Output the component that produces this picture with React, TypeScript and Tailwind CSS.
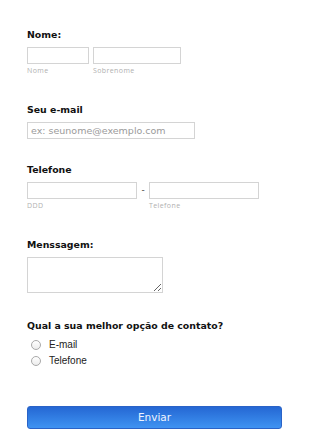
import React from "react";

const heading = "text-[9.4px] leading-[12px] font-bold text-[#111111]";
const sans = { fontFamily: '"DejaVu Sans", Verdana, sans-serif' };
const field =
  "block h-[17px] rounded-none border border-[#d4d4d4] bg-white px-[3px] outline-none";
const hint = "mt-[2px] text-[7px] leading-[9px] tracking-[0.4px] text-[#b0b0b0]";

function Radio({ label }: { label: string }) {
  return (
    <label className="flex h-[16px] items-center">
      <span className="ml-[4px] h-[10px] w-[10px] rounded-full border border-[#a9a9a9] bg-gradient-to-b from-white to-[#ececec]" />
      <span
        className="ml-[8px] text-[10px] leading-[12px] text-[#222222]"
        style={{ fontFamily: '"Liberation Sans", Arial, sans-serif' }}
      >
        {label}
      </span>
    </label>
  );
}

export default function App() {
  return (
    <div className="min-h-[448px] w-[310px] bg-white pl-[27px] pt-[29px]" style={sans}>
      <div>
        <p className={heading}>Nome:</p>
        <div className="mt-[6px] flex gap-[4px]">
          <div>
            <input className={`${field} w-[62px]`} />
            <p className={hint} style={{ fontFamily: '"Open Sans", sans-serif' }}>
              Nome
            </p>
          </div>
          <div>
            <input className={`${field} w-[88px]`} />
            <p className={hint} style={{ fontFamily: '"Open Sans", sans-serif' }}>
              Sobrenome
            </p>
          </div>
        </div>
      </div>

      <div className="mt-[29px]">
        <p className={heading}>Seu e-mail</p>
        <input
          className={`${field} mt-[6px] h-[16px] w-[168px] text-[9.5px] placeholder:text-[#9a9a9a]`}
          placeholder="ex: seunome@exemplo.com"
          style={sans}
        />
      </div>

      <div className="mt-[25px]">
        <p className={heading}>Telefone</p>
        <div className="mt-[6px] flex">
          <div>
            <input className={`${field} w-[110px]`} />
            <p className={hint} style={{ fontFamily: '"Open Sans", sans-serif' }}>
              DDD
            </p>
          </div>
          <span className="flex h-[17px] w-[12px] items-center justify-center text-[9px] text-[#444444]">
            -
          </span>
          <div>
            <input className={`${field} w-[110px]`} />
            <p className={hint} style={{ fontFamily: '"Open Sans", sans-serif' }}>
              Telefone
            </p>
          </div>
        </div>
      </div>

      <div className="mt-[29px]">
        <p className={heading}>Menssagem:</p>
        <textarea className="mt-[6px] block h-[36px] w-[136px] resize border border-[#d4d4d4] bg-white outline-none" />
      </div>

      <div className="mt-[27px]">
        <p className={heading}>Qual a sua melhor opção de contato?</p>
        <div className="mt-[5px]">
          <Radio label="E-mail" />
          <Radio label="Telefone" />
        </div>
      </div>

      <button
        className="mt-[37px] flex h-[23px] w-[255px] items-center justify-center rounded-[3px] border border-[#2a63c7] bg-gradient-to-b from-[#2567d3] to-[#3f93f2] text-[10.5px] text-[#eef4ff]"
        style={sans}
      >
        Enviar
      </button>
    </div>
  );
}
